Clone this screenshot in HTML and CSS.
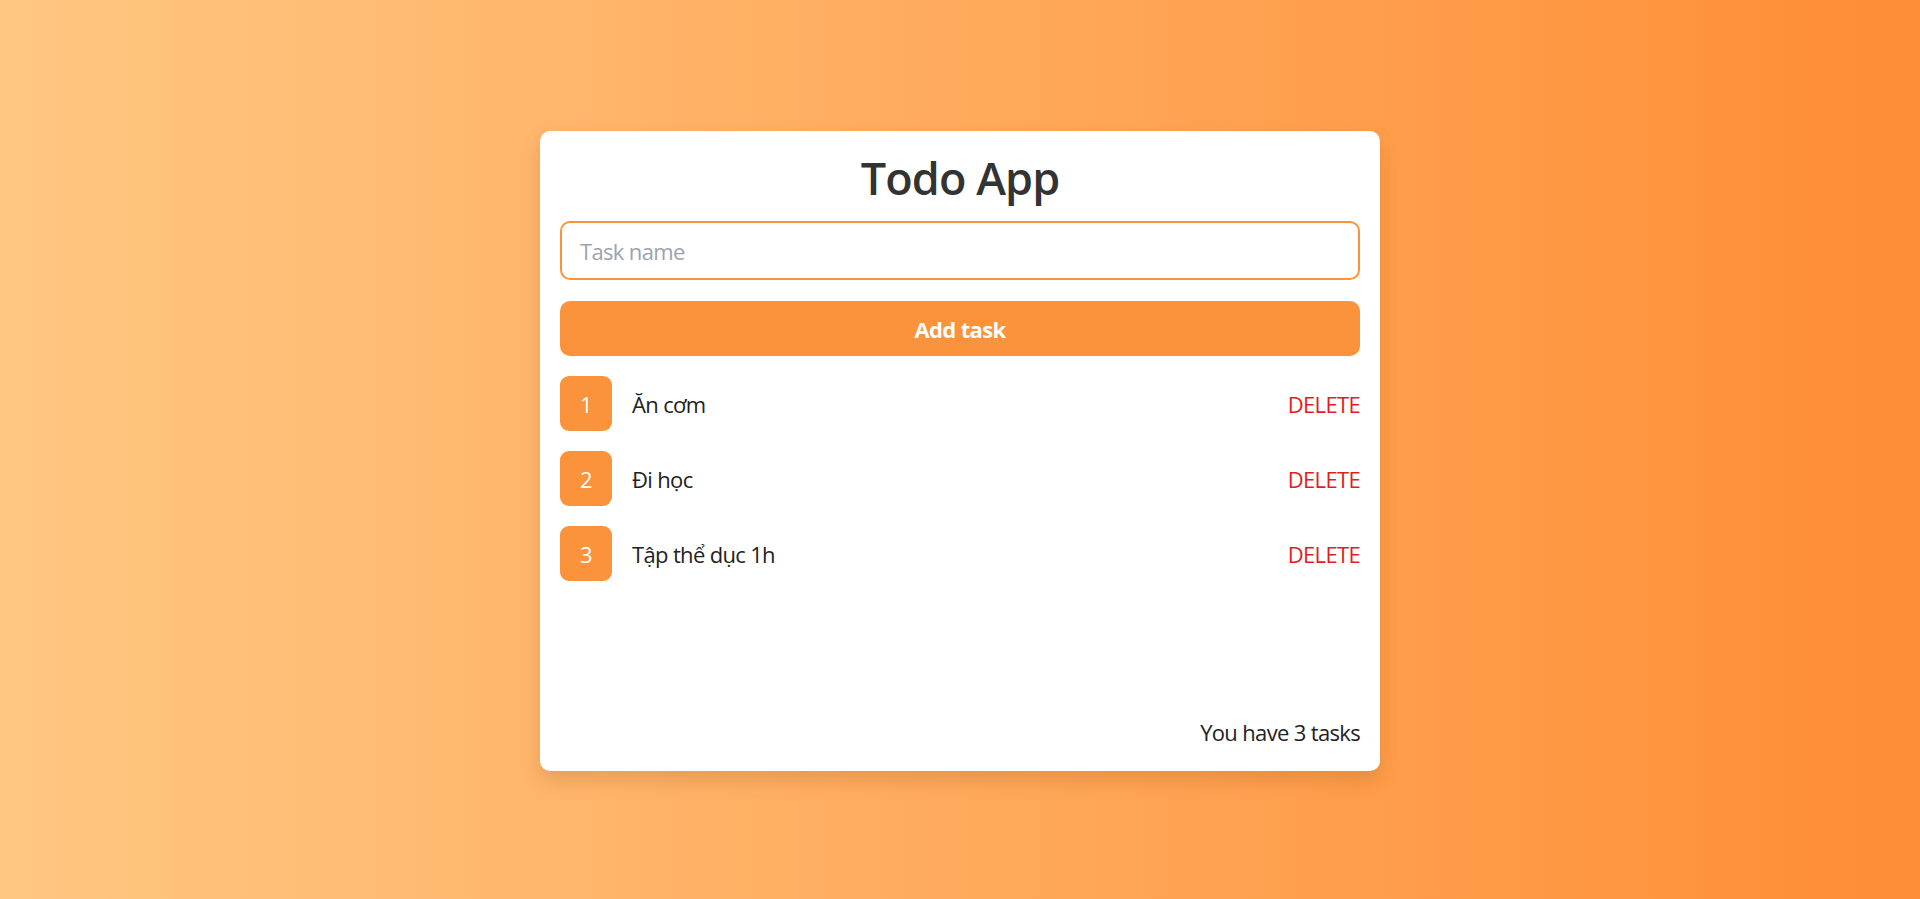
FILE: index.html
```html
<!DOCTYPE html>
<html lang="vi">
<head>
	<title>Todo App</title>
	<meta charset="utf-8">
	<meta name="viewport" content="width=device-width,initial-scale=1">
	<link rel="stylesheet" href="styles.css">
</head>
<body>
	<div class="app">
		<h1 class="title">Todo App</h1>
		<input class="task-input" type="text" placeholder="Task name" autofocus>
		<button class="add-btn">Add task</button>
		<ul class="tasks">
			<li class="task">
				<span class="task-num">1</span>
				<span class="task-name">Ăn cơm</span>
				<button class="task-del">DELETE</button>
			</li>
			<li class="task">
				<span class="task-num">2</span>
				<span class="task-name">Đi học</span>
				<button class="task-del">DELETE</button>
			</li>
			<li class="task">
				<span class="task-num">3</span>
				<span class="task-name">Tập thể dục 1h</span>
				<button class="task-del">DELETE</button>
			</li>
		</ul>
		<p class="count">You have 3 tasks</p>
	</div>
</body>
</html>
```

FILE: styles.css
```css
* {
	box-sizing: border-box;
}

body {
	margin: 0;
	min-height: 100vh;
	display: flex;
	align-items: center;
	justify-content: center;
	background: linear-gradient(to right, #ffc782, #ff8d35);
	font: 22px "Open Sans", "Noto Sans", sans-serif;
	letter-spacing: -0.03em;
	color: #222;
}

.app {
	width: 840px;
	height: 640px;
	margin-top: 3px;
	padding: 20px;
	background: #fff;
	border-radius: 10px;
	box-shadow: 0 10px 20px rgba(120, 60, 0, 0.18);
	display: flex;
	flex-direction: column;
}

.title {
	margin: 0 0 16px;
	font-size: 45px;
	line-height: 54px;
	font-weight: 600;
	letter-spacing: -0.02em;
	text-align: center;
	color: #333;
}

.task-input {
	height: 59px;
	padding: 0 18px;
	border: 2px solid #fb923c;
	border-radius: 10px;
	font: inherit;
	letter-spacing: inherit;
	color: #222;
	outline: none;
}

.task-input::placeholder {
	color: #9ca3af;
}

.add-btn {
	height: 55px;
	margin-top: 21px;
	border: 0;
	border-radius: 10px;
	background: #fb923c;
	color: #fff;
	font: inherit;
	font-weight: 700;
	letter-spacing: inherit;
	cursor: pointer;
}

.tasks {
	list-style: none;
	margin: 20px 0 0;
	padding: 0;
	display: flex;
	flex-direction: column;
	gap: 20px;
}

.task {
	display: flex;
	align-items: center;
	gap: 20px;
}

.task-num {
	width: 52px;
	height: 55px;
	border-radius: 9px;
	background: #fb923c;
	color: #fff;
	display: flex;
	align-items: center;
	justify-content: center;
}

.task-name {
	flex: 1;
}

.task-del {
	border: 0;
	padding: 0;
	background: none;
	color: #e11d1d;
	font: inherit;
	letter-spacing: inherit;
	cursor: pointer;
}

.count {
	margin: auto 0 4px;
	text-align: right;
}
```
